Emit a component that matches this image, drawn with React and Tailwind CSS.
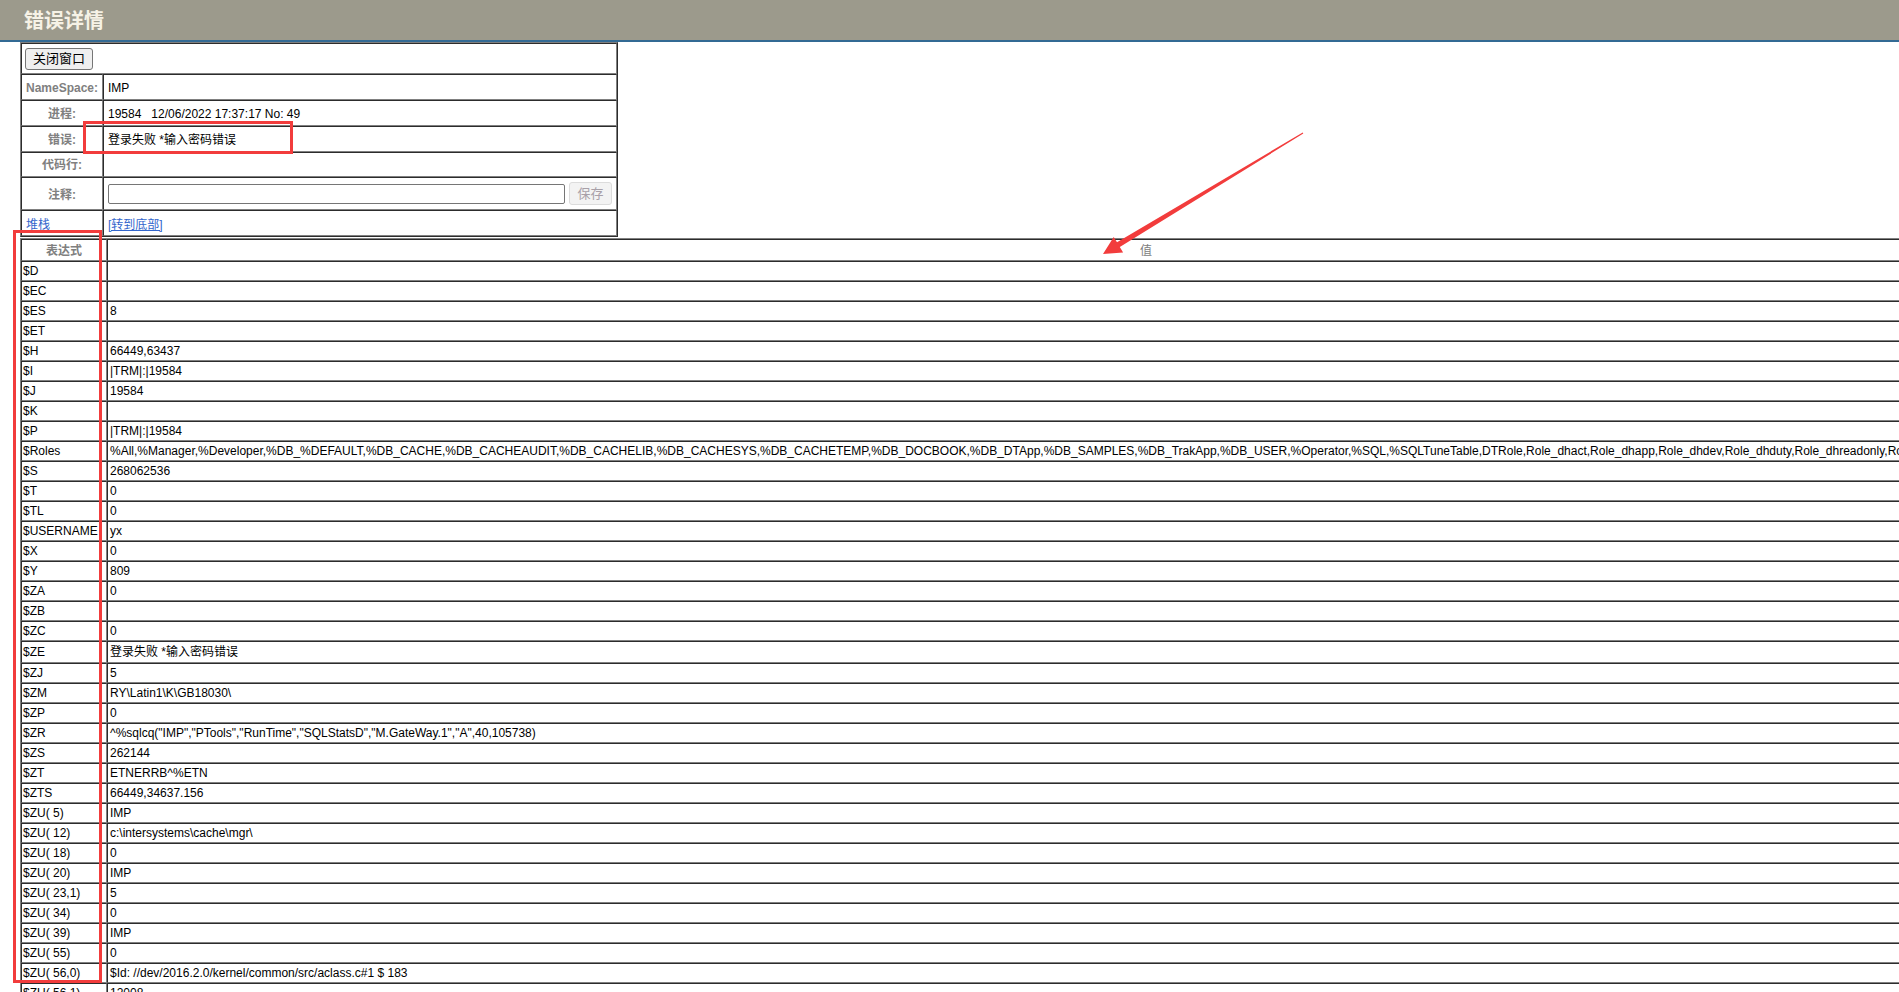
import React from "react";

const FONT = "font-['Liberation_Sans','Noto_Sans_CJK_SC',sans-serif]";
const CELL =
  "border border-t-[#2c2c2c] border-l-[#2c2c2c] border-b-[#808080] border-r-[#808080]";
const TABLE =
  "border-separate border-spacing-0 table-fixed border border-t-[#808080] border-l-[#808080] border-b-[#2c2c2c] border-r-[#2c2c2c]";

const roles =
  "%All,%Manager,%Developer,%DB_%DEFAULT,%DB_CACHE,%DB_CACHEAUDIT,%DB_CACHELIB,%DB_CACHESYS,%DB_CACHETEMP,%DB_DOCBOOK,%DB_DTApp,%DB_SAMPLES,%DB_TrakApp,%DB_USER,%Operator,%SQL,%SQLTuneTable,DTRole,Role_dhact,Role_dhapp,Role_dhdev,Role_dhduty,Role_dhreadonly,Role_dhreport,Role_dhsys,Role_dhuser";

const rows = [
  ["$D", ""],
  ["$EC", ""],
  ["$ES", "8"],
  ["$ET", ""],
  ["$H", "66449,63437"],
  ["$I", "|TRM|:|19584"],
  ["$J", "19584"],
  ["$K", ""],
  ["$P", "|TRM|:|19584"],
  ["$Roles", roles],
  ["$S", "268062536"],
  ["$T", "0"],
  ["$TL", "0"],
  ["$USERNAME", "yx"],
  ["$X", "0"],
  ["$Y", "809"],
  ["$ZA", "0"],
  ["$ZB", ""],
  ["$ZC", "0"],
  ["$ZE", "登录失败 *输入密码错误"],
  ["$ZJ", "5"],
  ["$ZM", "RY\\Latin1\\K\\GB18030\\"],
  ["$ZP", "0"],
  ["$ZR", '^%sqlcq("IMP","PTools","RunTime","SQLStatsD","M.GateWay.1","A",40,105738)'],
  ["$ZS", "262144"],
  ["$ZT", "ETNERRB^%ETN"],
  ["$ZTS", "66449,34637.156"],
  ["$ZU( 5)", "IMP"],
  ["$ZU( 12)", "c:\\intersystems\\cache\\mgr\\"],
  ["$ZU( 18)", "0"],
  ["$ZU( 20)", "IMP"],
  ["$ZU( 23,1)", "5"],
  ["$ZU( 34)", "0"],
  ["$ZU( 39)", "IMP"],
  ["$ZU( 55)", "0"],
  ["$ZU( 56,0)", "$Id: //dev/2016.2.0/kernel/common/src/aclass.c#1 $ 183"],
  ["$ZU( 56,1)", "12008"],
  ["$ZU( 61)", "18"],
  ["$ZU( 67,0)", "1"],
];

function Label({ children }) {
  return (
    <td className={`${CELL} px-[2px] pt-px text-center font-bold text-[#808080] whitespace-nowrap`}>
      {children}
    </td>
  );
}

function Value({ children }) {
  return <td className={`${CELL} pl-[4px] pr-[2px] pt-px whitespace-pre`}>{children}</td>;
}

export default function App() {
  return (
    <div className={`relative h-[992px] w-full overflow-hidden bg-white text-[12px] leading-[14px] text-black ${FONT}`}>
      {/* Header */}
      <div className="flex h-[42px] items-center border-b-2 border-[#336a94] bg-[#9c9a8c] pl-[24px]">
        <span className="pt-[2px] text-[20px] font-bold leading-[24px] text-[#f6f2e6]">错误详情</span>
      </div>

      {/* Top info table */}
      <table className={`${TABLE} ml-[20px] w-[598px]`}>
        <colgroup>
          <col className="w-[82px]" />
          <col />
        </colgroup>
        <tbody>
          <tr className="h-[31px]">
            <td colSpan={2} className={`${CELL} pl-[3px]`}>
              <button className="h-[22px] w-[68px] rounded-[3px] border border-[#767676] bg-[#efefef] text-[13px] leading-[16px] text-black">
                关闭窗口
              </button>
            </td>
          </tr>
          <tr className="h-[26px]">
            <Label>NameSpace:</Label>
            <Value>IMP</Value>
          </tr>
          <tr className="h-[26px]">
            <Label>进程:</Label>
            <Value>{"19584   12/06/2022 17:37:17 No: 49"}</Value>
          </tr>
          <tr className="h-[26px]">
            <Label>错误:</Label>
            <Value>登录失败 *输入密码错误</Value>
          </tr>
          <tr className="h-[25px]">
            <Label>代码行:</Label>
            <Value></Value>
          </tr>
          <tr className="h-[33px]">
            <td className={`${CELL} px-[2px] pt-[3px] text-center font-bold text-[#808080]`}>注释:</td>
            <td className={`${CELL} pl-[4px]`}>
              <div className="flex items-center gap-[4px]">
                <input
                  type="text"
                  className="h-[20px] w-[457px] rounded-[2px] border border-[#767676] bg-white px-[2px] text-[13px]"
                />
                <button
                  disabled
                  className="h-[23px] w-[43px] rounded-[3px] border border-[#dcdcdc] bg-[#f3f3f3] text-[13px] leading-[16px] text-[#a8a0a8]"
                >
                  保存
                </button>
              </div>
            </td>
          </tr>
          <tr className="h-[26px]">
            <td className={`${CELL} pl-[4px] pt-[3px] text-[#3366cc]`}>堆栈</td>
            <td className={`${CELL} pl-[4px] pt-[3px]`}>
              <span className="text-[#3366cc] underline">[转到底部]</span>
            </td>
          </tr>
        </tbody>
      </table>

      {/* Bottom variable table */}
      <table className={`${TABLE} mt-px ml-[20px] w-[2166px]`}>
        <colgroup>
          <col className="w-[86px]" />
          <col />
        </colgroup>
        <tbody>
          <tr className="h-[22px]">
            <td className={`${CELL} pt-px text-center font-bold text-[#808080]`}>表达式</td>
            <td className={`${CELL} pt-px text-center text-[#808080]`}>值</td>
          </tr>
          {rows.map(([k, v]) =>
            k === "$ZE" ? (
              <tr key={k} className="h-[22px]">
                <td className={`${CELL} pl-[1px] whitespace-pre`}>{k}</td>
                <td className={`${CELL} pl-[2px] whitespace-pre`}>{v}</td>
              </tr>
            ) : (
              <tr key={k} className="h-[20px]">
                <td className={`${CELL} pl-[1px] pb-px whitespace-pre`}>{k}</td>
                <td className={`${CELL} pl-[2px] pb-px whitespace-pre`}>{v}</td>
              </tr>
            )
          )}
        </tbody>
      </table>

      {/* Red annotation boxes */}
      <div className="pointer-events-none absolute left-[83px] top-[121px] h-[33px] w-[210px] border-[3px] border-[#f23c3c]" />
      <div className="pointer-events-none absolute left-[13px] top-[230px] h-[753px] w-[89px] border-[3px] border-[#f23c3c]" />

      {/* Red arrow */}
      <svg
        className="pointer-events-none absolute left-0 top-0"
        width="1899"
        height="992"
        viewBox="0 0 1899 992"
      >
        <polygon
          fill="#f23c3c"
          points="1302.7,132.5 1117.0,242.3 1113.7,237.0 1103,254 1123.1,252.4 1119.8,247.1 1303.3,133.5"
        />
      </svg>
    </div>
  );
}
